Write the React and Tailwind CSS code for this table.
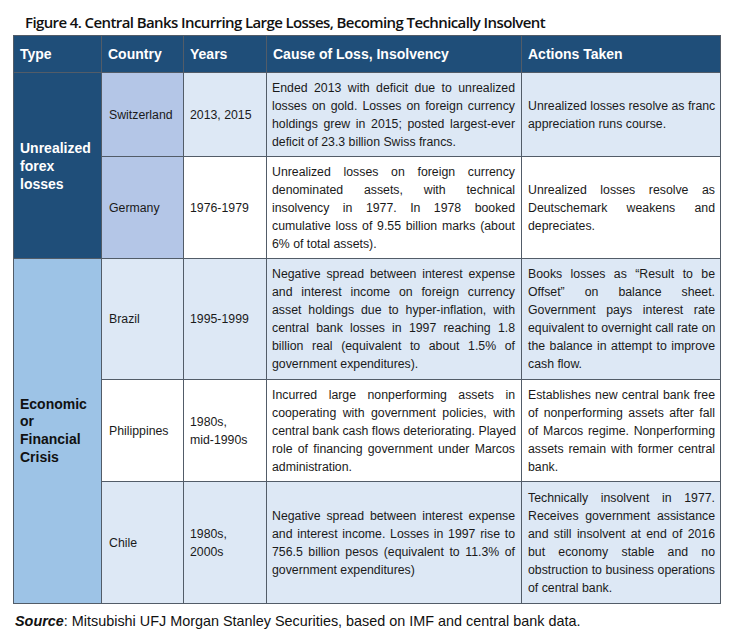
import React from "react";

const cellText = "text-[12.3px] leading-[18px] text-[#1a1a1a]";

// one line per entry so the justified breaks land where the figure has them
function Para({ lines, justify = true }) {
    return (
        <div className={cellText}>
            {lines.map((line, i) => (
                <div
                    key={i}
                    className={
                        "whitespace-nowrap " +
                        (justify && i < lines.length - 1 ? "text-justify [text-align-last:justify]" : "")
                    }
                >
                    {line}
                </div>
            ))}
        </div>
    );
}

const rows = [
    {
        country: "Switzerland",
        years: ["2013, 2015"],
        bg: "bg-[#dde8f5]",
        countryBg: "bg-[#b4c6e7]",
        cause: [
            "Ended 2013 with deficit due to unrealized",
            "losses on gold. Losses on foreign currency",
            "holdings grew in 2015; posted largest-ever",
            "deficit of 23.3 billion Swiss francs.",
        ],
        actions: ["Unrealized losses resolve as franc", "appreciation runs course."],
        actionsJustify: false,
    },
    {
        country: "Germany",
        years: ["1976-1979"],
        bg: "bg-white",
        countryBg: "bg-[#b4c6e7]",
        cause: [
            "Unrealized losses on foreign currency",
            "denominated assets, with technical",
            "insolvency in 1977. In 1978 booked",
            "cumulative loss of 9.55 billion marks (about",
            "6% of total assets).",
        ],
        actions: ["Unrealized losses resolve as", "Deutschemark weakens and", "depreciates."],
    },
    {
        country: "Brazil",
        years: ["1995-1999"],
        bg: "bg-[#dde8f5]",
        countryBg: "bg-[#dde8f5]",
        cause: [
            "Negative spread between interest expense",
            "and interest income on foreign currency",
            "asset holdings due to hyper-inflation, with",
            "central bank losses in 1997 reaching 1.8",
            "billion real (equivalent to about 1.5% of",
            "government expenditures).",
        ],
        actions: [
            "Books losses as \u201cResult to be",
            "Offset\u201d on balance sheet.",
            "Government pays interest rate",
            "equivalent to overnight call rate on",
            "the balance in attempt to improve",
            "cash flow.",
        ],
    },
    {
        country: "Philippines",
        years: ["1980s,", "mid-1990s"],
        bg: "bg-white",
        countryBg: "bg-white",
        cause: [
            "Incurred large nonperforming assets in",
            "cooperating with government policies, with",
            "central bank cash flows deteriorating. Played",
            "role of financing government under Marcos",
            "administration.",
        ],
        actions: [
            "Establishes new central bank free",
            "of nonperforming assets after fall",
            "of Marcos regime. Nonperforming",
            "assets remain with former central",
            "bank.",
        ],
    },
    {
        country: "Chile",
        years: ["1980s,", "2000s"],
        bg: "bg-[#dde8f5]",
        countryBg: "bg-[#dde8f5]",
        cause: [
            "Negative spread between interest expense",
            "and interest income. Losses in 1997 rise to",
            "756.5 billion pesos (equivalent to 11.3% of",
            "government expenditures)",
        ],
        actions: [
            "Technically insolvent in 1977.",
            "Receives government assistance",
            "and still insolvent at end of 2016",
            "but economy stable and no",
            "obstruction to business operations",
            "of central bank.",
        ],
    },
];

const headers = ["Type", "Country", "Years", "Cause of Loss, Insolvency", "Actions Taken"];

export default function App() {
    return (
        <div className="w-[730px] h-[639px] bg-white font-['Liberation_Sans',Arial,sans-serif]">
            <h1 className="pt-[12px] pl-[25px] h-[35px] text-[15px] leading-[20px] font-semibold tracking-[-0.6px] text-[#111] font-['Open_Sans',sans-serif]">
                Figure 4. Central Banks Incurring Large Losses, Becoming Technically Insolvent
            </h1>

            <div className="ml-[13px] w-[708px] grid grid-cols-[87px_81px_82px_254px_198px] grid-rows-[36px_83px_101px_120px_101px_121px] gap-px p-px bg-[#525c68]">
                {headers.map((h) => (
                    <div
                        key={h}
                        className="bg-[#1f4e79] text-white font-bold text-[14px] flex items-center pl-[6px]"
                    >
                        {h}
                    </div>
                ))}

                {rows.map((r, i) => (
                    <React.Fragment key={r.country}>
                        {i === 0 && (
                            <div className="row-span-2 bg-[#1f4e79] text-white font-bold text-[14px] leading-[18px] flex items-center pl-[6px]">
                                <div>
                                    Unrealized
                                    <br />
                                    forex
                                    <br />
                                    losses
                                </div>
                            </div>
                        )}
                        {i === 2 && (
                            <div className="row-span-3 bg-[#9dc3e6] text-[#111] font-bold text-[14px] leading-[17.6px] flex items-center pl-[6px]">
                                <div>
                                    Economic
                                    <br />
                                    or
                                    <br />
                                    Financial
                                    <br />
                                    Crisis
                                </div>
                            </div>
                        )}
                        <div className={`${r.countryBg} ${cellText} flex items-center pl-[7px]`}>{r.country}</div>
                        <div className={`${r.bg} flex items-center pl-[6px]`}>
                            <Para lines={r.years} justify={false} />
                        </div>
                        <div className={`${r.bg} flex items-center pl-[5px] pr-[6px]`}>
                            <div className="w-full">
                                <Para lines={r.cause} />
                            </div>
                        </div>
                        <div className={`${r.bg} flex items-center pl-[6px] pr-[5px]`}>
                            <div className="w-full">
                                <Para lines={r.actions} justify={r.actionsJustify !== false} />
                            </div>
                        </div>
                    </React.Fragment>
                ))}
            </div>

            <p className="mt-[8px] pl-[15px] text-[14.4px] leading-[18px] text-[#111]">
                <span className="font-bold italic">Source</span>: Mitsubishi UFJ Morgan Stanley Securities, based on IMF and central bank data.
            </p>
        </div>
    );
}
